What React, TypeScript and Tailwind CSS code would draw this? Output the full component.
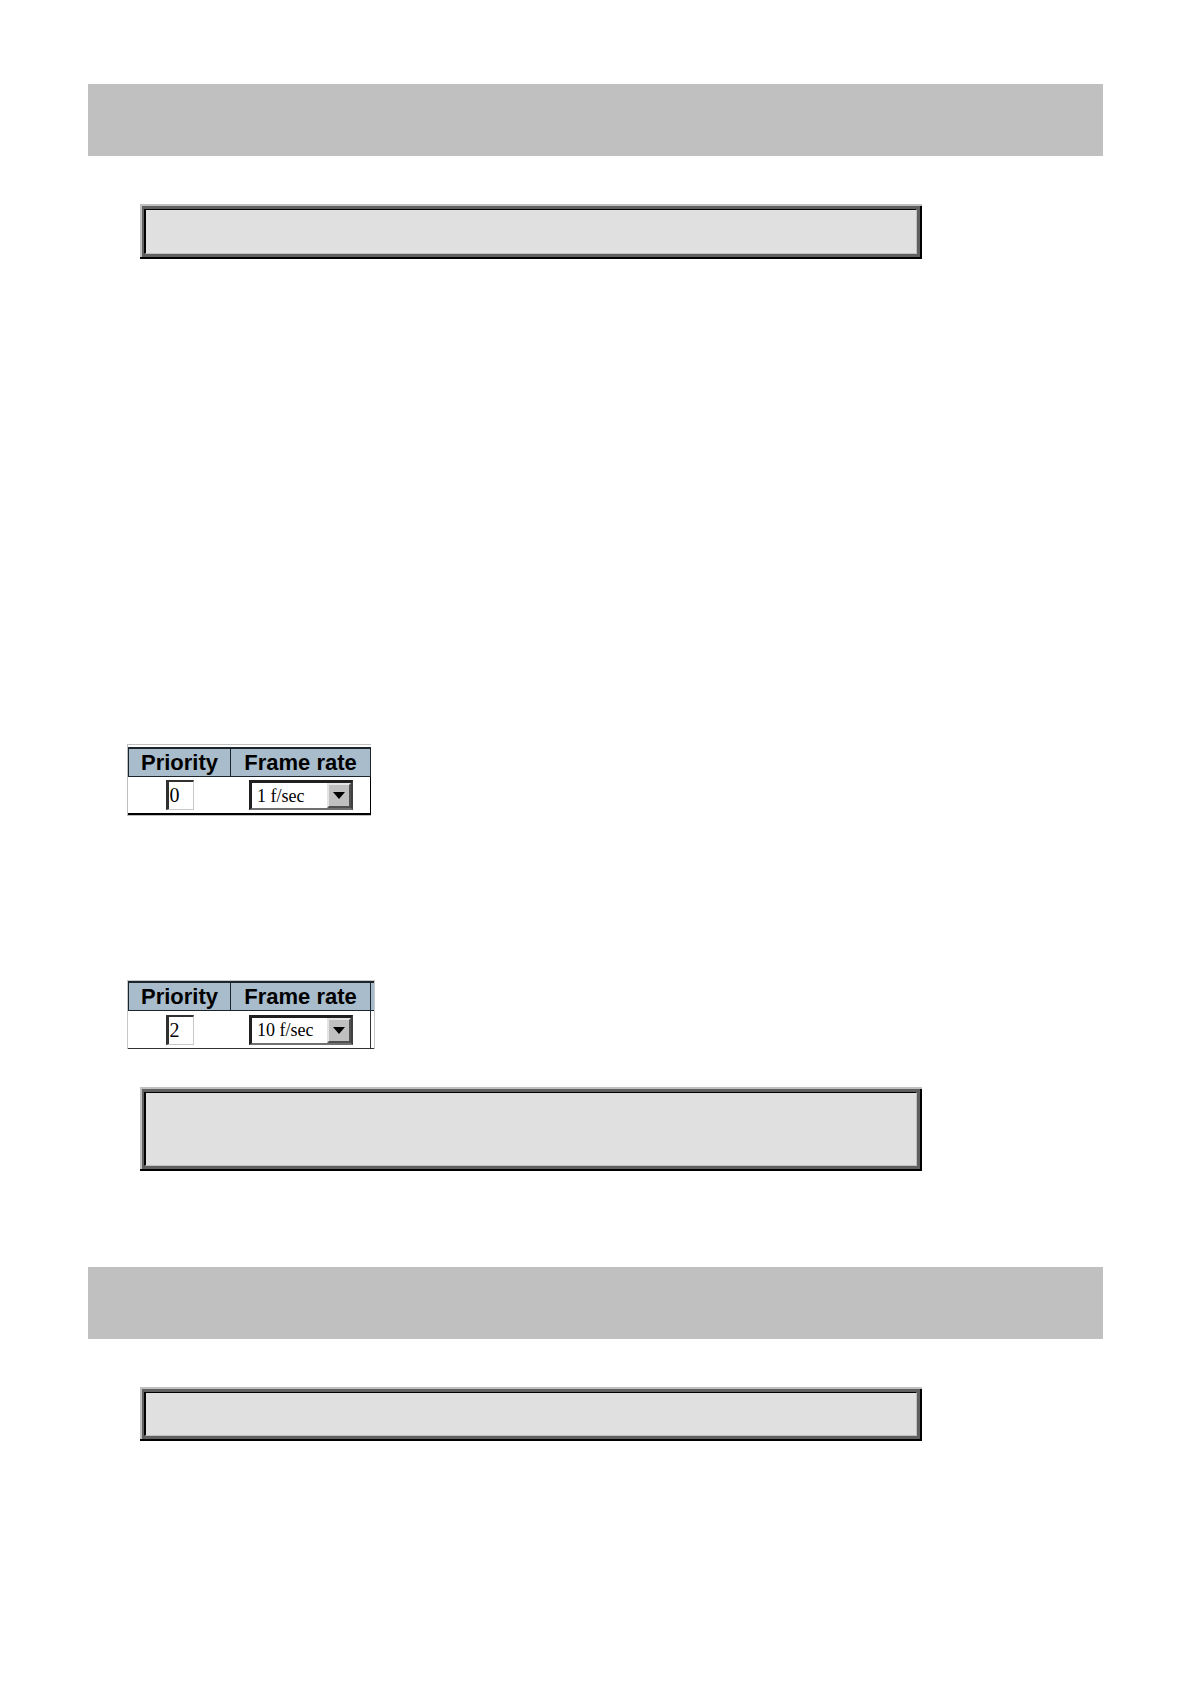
import { useState } from "react";

const rates = ["1 f/sec", "5 f/sec", "10 f/sec", "15 f/sec", "30 f/sec"];

function Banner() {
    return <div className="h-18 w-full bg-[#c0c0c0]"></div>
}

// bevelled box: light/black rim, grey middle band, sunken inner edge
function NoteBox({ size }: { size: string }) {
    return (
        <div className="ml-[52px] mr-[52px] max-w-[782px] border-y-2 border-t-[#c0c0c0] border-b-black">
            <div className="border-x-2 border-l-[#c0c0c0] border-r-black">
                <div className="border-3 border-l-2 border-[#606060]">
                    <div className={`${size} border border-l-2 border-t-black border-l-black border-r-[#c0c0c0] border-b-[#c0c0c0] bg-[#e0e0e0]`}></div>
                </div>
            </div>
        </div>
    )
}

type SettingsProps = {
    id: string
    startPriority: string
    startRate: string
    cut?: boolean
}

function RateTable({ id, startPriority, startRate, cut }: SettingsProps) {

    const [priority, setPriority] = useState(startPriority)
    const [rate, setRate] = useState(startRate)

    return (
        <div className={cut ? "ml-[39px] w-[248px] border border-b-0 border-[#c8c8c8]" : "ml-[39px] w-[244px] border border-r-0 border-[#c0c0c0] pt-[2px]"}>
            <table className="w-full table-fixed border-separate border-spacing-0">
                <colgroup>
                    <col className="w-[103px]" />
                    <col />
                    {cut && <col className="w-[3px]" />}
                </colgroup>
                <thead>
                    <tr className="bg-[#a8bccb]">
                        <th id={`${id}-priority`} className="border border-t-2 border-[#1c242c] p-0 text-[22px] leading-[27px]">Priority</th>
                        <th id={`${id}-rate`} className="border-t-2 border-r border-b border-[#1c242c] p-0 text-[22px] leading-[27px]">Frame rate</th>
                        {cut && <td className="border-t-2 border-b border-[#1c242c] p-0"></td>}
                    </tr>
                </thead>
                <tbody>
                    <tr>
                        <td className={cut ? "h-[38px] border-b border-[#303030] p-0" : "h-[38px] border-b-2 border-black p-0"}>
                            <input
                                className="mx-auto block h-[30px] w-7 border border-t-2 border-l-3 border-t-[#303030] border-l-[#303030] border-r-[#c8c8c8] border-b-[#c8c8c8] bg-white px-px font-['Liberation_Serif',serif] text-[20px] leading-6 outline-none"
                                aria-labelledby={`${id}-priority`}
                                value={priority}
                                onChange={(e) => setPriority(e.target.value)}
                            />
                        </td>
                        <td className={cut ? "border-r border-b border-[#303030] p-0" : "border-r border-b-2 border-black p-0"}>
                            <div className="relative ml-[18px] w-[104px]">
                                <select
                                    className="block h-[30px] w-full appearance-none border-2 border-t-3 border-l-3 border-t-[#202020] border-l-[#202020] border-r-[#404040] border-b-[#707070] bg-white pl-[5px] font-['Liberation_Serif',serif] text-[18px] leading-6 outline-none"
                                    aria-labelledby={`${id}-rate`}
                                    value={rate}
                                    onChange={(e) => setRate(e.target.value)}
                                >
                                    {rates.map((r) => (
                                        <option key={r}>{r}</option>
                                    ))}
                                </select>
                                <span className="pointer-events-none absolute top-[3px] right-[2px] flex h-[25px] w-6 items-center justify-center border-2 border-t-[#e4e4e4] border-l-[#e4e4e4] border-r-[#505050] border-b-[#505050] bg-[#c0c0c0]">
                                    <svg width="12" height="7" viewBox="0 0 12 7" aria-hidden="true">
                                        <path d="M0 0h12L6 7z" fill="#000" />
                                    </svg>
                                </span>
                            </div>
                        </td>
                        {cut && <td className="border-b border-[#303030] p-0"></td>}
                    </tr>
                </tbody>
            </table>
        </div>
    )
}

export default function App() {
    return (
        <main className="min-h-screen bg-white px-[88px] pt-[84px] font-['Liberation_Sans',Arial,sans-serif] text-black">
            <section>
                <Banner />
                <div className="mt-12">
                    <NoteBox size="h-[45px]" />
                </div>
                <div className="mt-[485px]">
                    <RateTable id="low" startPriority="0" startRate="1 f/sec" />
                </div>
                <div className="mt-[164px]">
                    <RateTable id="high" startPriority="2" startRate="10 f/sec" cut />
                </div>
                <div className="mt-[38px]">
                    <NoteBox size="h-[74px]" />
                </div>
            </section>

            <section className="mt-24">
                <Banner />
                <div className="mt-12">
                    <NoteBox size="h-[44px]" />
                </div>
            </section>
        </main>
    )
}
